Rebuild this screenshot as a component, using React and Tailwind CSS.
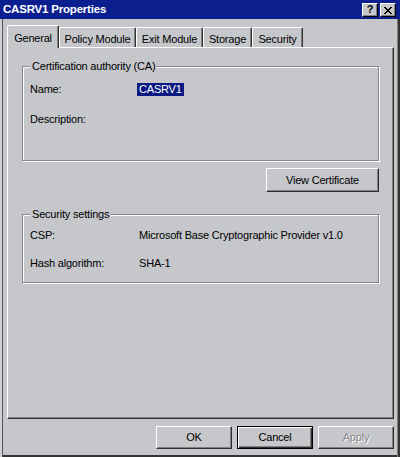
const bevel =
  'border border-t-white border-l-white border-r-[#303030] border-b-[#303030] shadow-[inset_-1px_-1px_0_#808080]';

function WinButton({ children, className = '', isDefault, disabled }) {
  const frame = isDefault
    ? 'border border-black shadow-[inset_1px_1px_0_#fff,inset_-1px_-1px_0_#303030,inset_-2px_-2px_0_#808080]'
    : bevel;
  return (
    <button
      className={`w-[76px] h-[23px] flex items-center justify-center bg-[#c5c7cb] ${frame} ${
        disabled ? 'text-[#8a8a8a] [text-shadow:1px_1px_0_#fff]' : 'text-black'
      } ${className}`}
    >
      {children}
    </button>
  );
}

function GroupBox({ label, className = '', children }) {
  return (
    <div
      className={`relative border border-[#868686] shadow-[inset_1px_1px_0_#fff,1px_1px_0_#fff] ${className}`}
    >
      <span className="absolute -top-[7px] left-[7px] px-[2px] leading-[13px] bg-[#c5c7cb]">
        {label}
      </span>
      {children}
    </div>
  );
}

function Row({ label, children }) {
  return (
    <div className="flex h-[15px] items-center">
      <div className="w-[109px] shrink-0">{label}</div>
      <div>{children}</div>
    </div>
  );
}

const tabs = ['General', 'Policy Module', 'Exit Module', 'Storage', 'Security'];
const tabWidths = { 'Policy Module': 'w-[77px]', 'Exit Module': 'w-[67px]', Storage: 'w-[49px]', Security: 'w-[51px]' };

function CaptionButton({ children, className = '' }) {
  return (
    <div
      className={`w-[16px] h-[14px] bg-[#c5c7cb] flex items-center justify-center border border-t-white border-l-white border-r-black border-b-black shadow-[inset_-1px_-1px_0_#808080] ${className}`}
    >
      {children}
    </div>
  );
}

export default function App() {
  return (
    <div className="w-[400px] h-[457px] bg-[#c5c7cb] flex flex-col font-['Liberation_Sans',Arial,sans-serif] text-[11px] tracking-[-0.2px] text-black overflow-hidden select-none">
      {/* caption */}
      <div className="h-[19px] shrink-0 bg-[#0b1f8f] flex items-center pl-[3px] pr-[4px]">
        <span className="text-white font-bold text-[11.5px] tracking-[-0.2px]">CASRV1 Properties</span>
        <div className="ml-auto flex items-center gap-[2px] pt-[1px]">
          <CaptionButton>
            <span className="font-bold text-[11px] leading-none -mt-[1px]">?</span>
          </CaptionButton>
          <CaptionButton>
            <svg width="8" height="7" viewBox="0 0 8 7" shapeRendering="crispEdges">
              <path
                d="M0 0h2v1H0zM6 0h2v1H6zM1 1h2v1H1zM5 1h2v1H5zM2 2h4v1H2zM3 3h2v1H3zM2 4h4v1H2zM1 5h2v1H1zM5 5h2v1H5zM0 6h2v1H0zM6 6h2v1H6z"
                fill="#000"
              />
            </svg>
          </CaptionButton>
        </div>
      </div>

      {/* body */}
      <div className="flex-1 flex flex-col shadow-[inset_2px_0_0_#d0d2d6,inset_3px_0_0_#555,inset_-2px_0_0_#333,inset_-3px_0_0_#808080,inset_0_-2px_0_#333]">
        {/* tabs */}
        <div className="flex items-end mt-[6px] ml-[7px] h-[22px] relative z-10">
          {tabs.map((t) =>
            t === 'General' ? (
              <div
                key={t}
                className="w-[52px] h-[23px] -mb-[1px] bg-[#c5c7cb] border-t border-l border-r border-t-white border-l-white border-r-[#303030] rounded-t-[2px] shadow-[inset_-1px_0_0_#808080] flex justify-center pt-[4px]"
              >
                {t}
              </div>
            ) : (
              <div
                key={t}
                className={`${tabWidths[t]} h-[20px] bg-[#c5c7cb] border-t border-l border-r border-t-white border-l-white border-r-[#303030] rounded-t-[2px] shadow-[inset_-1px_0_0_#808080] flex justify-center pt-[3px]`}
              >
                {t}
              </div>
            )
          )}
        </div>

        {/* panel */}
        <div
          className={`ml-[7px] mr-[6px] h-[372px] flex flex-col px-[14px] ${bevel}`}
        >
          <GroupBox label="Certification authority (CA)" className="mt-[18px] h-[95px]">
            <div className="flex flex-col gap-[15px] pt-[15px] pl-[7px]">
              <Row label="Name:">
                <span className="bg-[#0a1a82] text-white px-[2px] leading-[13px] inline-block -ml-[2px]">
                  CASRV1
                </span>
              </Row>
              <Row label="Description:" />
            </div>
          </GroupBox>

          <div className="flex justify-end mt-[7px]">
            <button className={`w-[113px] h-[24px] flex items-center justify-center bg-[#c5c7cb] ${bevel}`}>
              View Certificate
            </button>
          </div>

          <GroupBox label="Security settings" className="mt-[22px] h-[69px]">
            <div className="flex flex-col gap-[13px] pt-[13px] pl-[7px]">
              <Row label="CSP:">Microsoft Base Cryptographic Provider v1.0</Row>
              <Row label="Hash algorithm:">SHA-1</Row>
            </div>
          </GroupBox>
        </div>

        {/* dialog buttons */}
        <div className="flex justify-end gap-[5px] mt-[7px] mr-[6px]">
          <WinButton>OK</WinButton>
          <WinButton isDefault>Cancel</WinButton>
          <WinButton disabled>Apply</WinButton>
        </div>
      </div>
    </div>
  );
}
